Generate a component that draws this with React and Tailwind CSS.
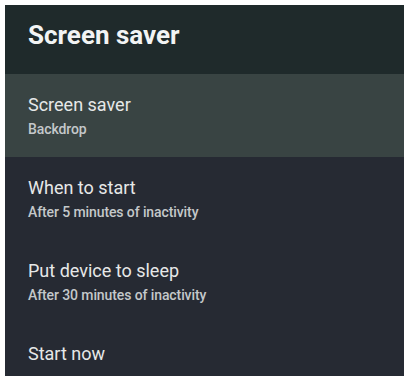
import React from "react";

const rows = [
  { title: "Screen saver", sub: "Backdrop", active: true },
  { title: "When to start", sub: "After 5 minutes of inactivity" },
  { title: "Put device to sleep", sub: "After 30 minutes of inactivity" },
  { title: "Start now" },
];

function Row({ row }) {
  return (
    <div
      className={
        "h-[83px] px-[23px] pt-[21px] " +
        (row.active ? "bg-[#394443]" : "bg-[#262a33]")
      }
    >
      <div className="text-[18px] leading-[20px] text-[#e6e8e8]">{row.title}</div>
      {row.sub && (
        <div className="mt-[6px] text-[14px] leading-[16px] font-medium text-[#c4c8ca] tracking-[-0.1px]">
          {row.sub}
        </div>
      )}
    </div>
  );
}

export default function App() {
  return (
    <div
      className="w-[407px] h-[379px] bg-white pt-[5px] pl-[5px] pr-[3px] pb-[3px]"
      style={{ fontFamily: "Roboto, 'Noto Sans', sans-serif" }}
    >
      <div className="h-full bg-[#262a33] overflow-hidden">
        {/* Header */}
        <div className="h-[69px] bg-[#1f2a2b] px-[23px] pt-[15px]">
          <h1 className="text-[26px] leading-[30px] font-bold text-[#f2f4f4]">Screen saver</h1>
        </div>
        {rows.map((row) => (
          <Row key={row.title} row={row} />
        ))}
      </div>
    </div>
  );
}
